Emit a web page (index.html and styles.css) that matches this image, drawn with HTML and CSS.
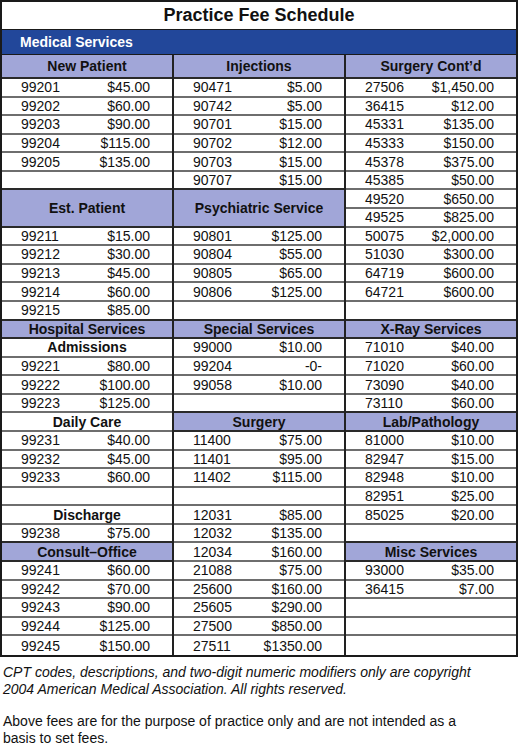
FILE: index.html
```html
<!DOCTYPE html>
<html lang="en">
<head>
<meta charset="utf-8">
<title>Practice Fee Schedule</title>
<link rel="stylesheet" href="styles.css">
</head>
<body>
<div class="sheet">
  <div class="title">Practice Fee Schedule</div>
  <div class="band">Medical Services</div>
  <div class="cols">
    <div class="col">
      <div class="row head top">New Patient</div>
      <div class="row"><span>99201</span><span>$45.00</span></div>
      <div class="row"><span>99202</span><span>$60.00</span></div>
      <div class="row"><span>99203</span><span>$90.00</span></div>
      <div class="row"><span>99204</span><span>$115.00</span></div>
      <div class="row"><span>99205</span><span>$135.00</span></div>
      <div class="row"></div>
      <div class="row head dbl">Est. Patient</div>
      <div class="row"><span>99211</span><span>$15.00</span></div>
      <div class="row"><span>99212</span><span>$30.00</span></div>
      <div class="row"><span>99213</span><span>$45.00</span></div>
      <div class="row"><span>99214</span><span>$60.00</span></div>
      <div class="row"><span>99215</span><span>$85.00</span></div>
      <div class="row head">Hospital Services</div>
      <div class="row sub">Admissions</div>
      <div class="row"><span>99221</span><span>$80.00</span></div>
      <div class="row"><span>99222</span><span>$100.00</span></div>
      <div class="row"><span>99223</span><span>$125.00</span></div>
      <div class="row sub">Daily Care</div>
      <div class="row"><span>99231</span><span>$40.00</span></div>
      <div class="row"><span>99232</span><span>$45.00</span></div>
      <div class="row"><span>99233</span><span>$60.00</span></div>
      <div class="row"></div>
      <div class="row sub">Discharge</div>
      <div class="row"><span>99238</span><span>$75.00</span></div>
      <div class="row head">Consult–Office</div>
      <div class="row"><span>99241</span><span>$60.00</span></div>
      <div class="row"><span>99242</span><span>$70.00</span></div>
      <div class="row"><span>99243</span><span>$90.00</span></div>
      <div class="row"><span>99244</span><span>$125.00</span></div>
      <div class="row"><span>99245</span><span>$150.00</span></div>
    </div>
    <div class="col">
      <div class="row head top">Injections</div>
      <div class="row"><span>90471</span><span>$5.00</span></div>
      <div class="row"><span>90742</span><span>$5.00</span></div>
      <div class="row"><span>90701</span><span>$15.00</span></div>
      <div class="row"><span>90702</span><span>$12.00</span></div>
      <div class="row"><span>90703</span><span>$15.00</span></div>
      <div class="row"><span>90707</span><span>$15.00</span></div>
      <div class="row head dbl">Psychiatric Service</div>
      <div class="row"><span>90801</span><span>$125.00</span></div>
      <div class="row"><span>90804</span><span>$55.00</span></div>
      <div class="row"><span>90805</span><span>$65.00</span></div>
      <div class="row"><span>90806</span><span>$125.00</span></div>
      <div class="row"></div>
      <div class="row head">Special Services</div>
      <div class="row"><span>99000</span><span>$10.00</span></div>
      <div class="row"><span>99204</span><span>-0-</span></div>
      <div class="row"><span>99058</span><span>$10.00</span></div>
      <div class="row"></div>
      <div class="row head">Surgery</div>
      <div class="row"><span>11400</span><span>$75.00</span></div>
      <div class="row"><span>11401</span><span>$95.00</span></div>
      <div class="row"><span>11402</span><span>$115.00</span></div>
      <div class="row"></div>
      <div class="row"><span>12031</span><span>$85.00</span></div>
      <div class="row"><span>12032</span><span>$135.00</span></div>
      <div class="row"><span>12034</span><span>$160.00</span></div>
      <div class="row"><span>21088</span><span>$75.00</span></div>
      <div class="row"><span>25600</span><span>$160.00</span></div>
      <div class="row"><span>25605</span><span>$290.00</span></div>
      <div class="row"><span>27500</span><span>$850.00</span></div>
      <div class="row"><span>27511</span><span>$1350.00</span></div>
    </div>
    <div class="col">
      <div class="row head top">Surgery Cont’d</div>
      <div class="row"><span>27506</span><span>$1,450.00</span></div>
      <div class="row"><span>36415</span><span>$12.00</span></div>
      <div class="row"><span>45331</span><span>$135.00</span></div>
      <div class="row"><span>45333</span><span>$150.00</span></div>
      <div class="row"><span>45378</span><span>$375.00</span></div>
      <div class="row"><span>45385</span><span>$50.00</span></div>
      <div class="row"><span>49520</span><span>$650.00</span></div>
      <div class="row"><span>49525</span><span>$825.00</span></div>
      <div class="row"><span>50075</span><span>$2,000.00</span></div>
      <div class="row"><span>51030</span><span>$300.00</span></div>
      <div class="row"><span>64719</span><span>$600.00</span></div>
      <div class="row"><span>64721</span><span>$600.00</span></div>
      <div class="row"></div>
      <div class="row head">X-Ray Services</div>
      <div class="row"><span>71010</span><span>$40.00</span></div>
      <div class="row"><span>71020</span><span>$60.00</span></div>
      <div class="row"><span>73090</span><span>$40.00</span></div>
      <div class="row"><span>73110</span><span>$60.00</span></div>
      <div class="row head">Lab/Pathology</div>
      <div class="row"><span>81000</span><span>$10.00</span></div>
      <div class="row"><span>82947</span><span>$15.00</span></div>
      <div class="row"><span>82948</span><span>$10.00</span></div>
      <div class="row"><span>82951</span><span>$25.00</span></div>
      <div class="row"><span>85025</span><span>$20.00</span></div>
      <div class="row"></div>
      <div class="row head">Misc Services</div>
      <div class="row"><span>93000</span><span>$35.00</span></div>
      <div class="row"><span>36415</span><span>$7.00</span></div>
      <div class="row"></div>
      <div class="row"></div>
      <div class="row"></div>
    </div>
  </div>
</div>
<div class="notes">
  <p class="copy">CPT codes, descriptions, and two-digit numeric modifiers only are copyright 2004 American Medical Association. All rights reserved.</p>
  <p>Above fees are for the purpose of practice only and are not intended as a basis to set fees.</p>
</div>
</body>
</html>
```

FILE: styles.css
```css
* { box-sizing: border-box; }

html, body {
  margin: 0;
  padding: 0;
  background: #ffffff;
}

body {
  font-family: "Liberation Sans", Arial, sans-serif;
  color: #111111;
  font-size: 14px;
  width: 518px;
}

.sheet {
  border: 2px solid #1a1a1a;
  width: 518px;
}

.title {
  height: 28px;
  display: flex;
  align-items: center;
  justify-content: center;
  font-weight: bold;
  font-size: 18px;
  border-bottom: 1px solid #1a1a1a;
}

.band {
  height: 25px;
  background: #22479a;
  color: #ffffff;
  font-weight: bold;
  font-size: 14px;
  display: flex;
  align-items: center;
  padding-left: 18px;
  border-bottom: 1px solid #1a1a1a;
}

.cols {
  display: grid;
  grid-template-columns: 170px 170px 170px;
  column-gap: 2px;
  background: #222222;
}

.col {
  display: grid;
  grid-template-rows: 24px;
  grid-auto-rows: 18.58px;
  background: #ffffff;
}

.row {
  display: flex;
  align-items: center;
  justify-content: space-between;
  padding: 0 22px 0 19px;
  border-bottom: 2px solid #6e6e6e;
  line-height: 1;
  white-space: nowrap;
}

.row:last-child {
  border-bottom: none;
}

.head,
.sub {
  justify-content: center;
  font-weight: bold;
  padding: 0;
}

.head {
  background: #a1a6d8;
  border-bottom-color: #2a2a2a;
}

.row:has(+ .head) {
  border-bottom-color: #2a2a2a;
}

.dbl {
  grid-row: span 2;
}

.notes {
  width: 492px;
  padding: 7px 3px 0 3px;
  font-size: 14px;
  line-height: 17.5px;
}

.notes p {
  margin: 0 0 14px 0;
}

.notes .copy {
  font-style: italic;
}
```
